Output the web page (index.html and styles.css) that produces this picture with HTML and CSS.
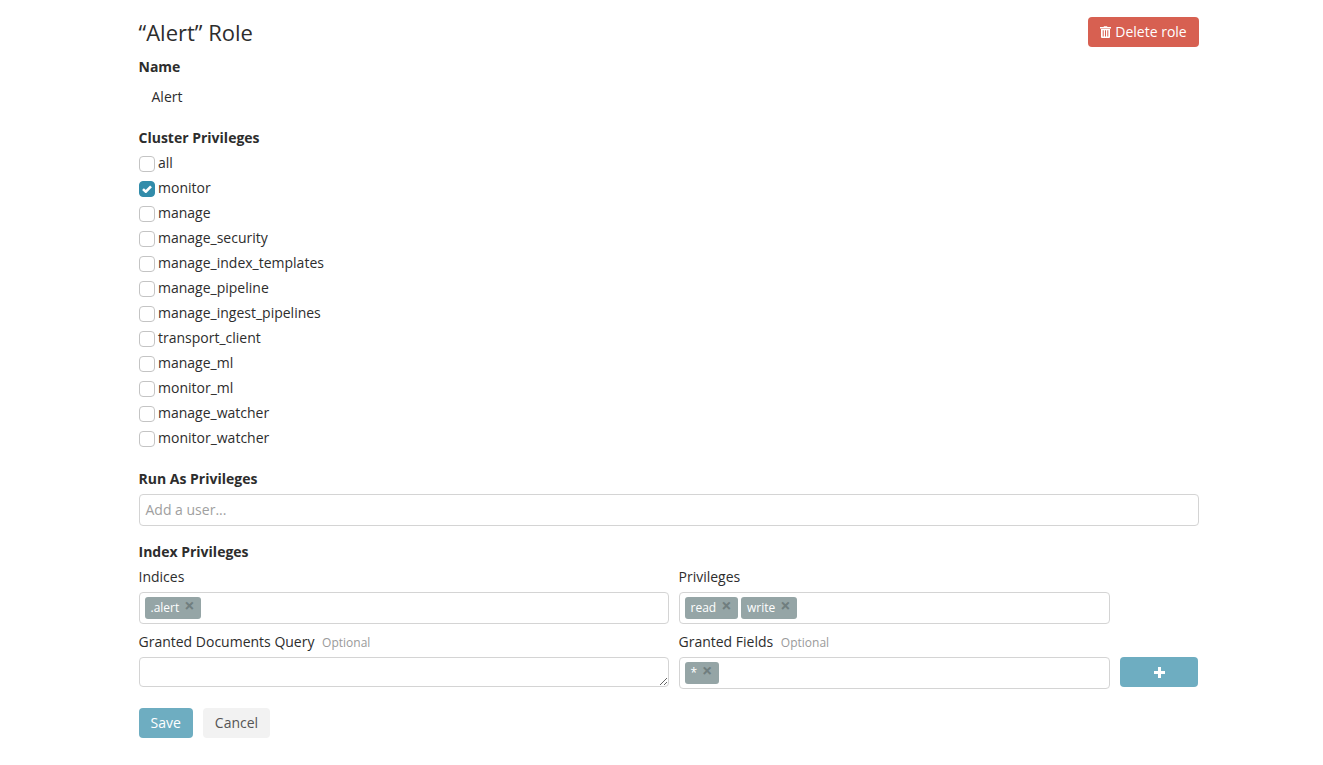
FILE: index.html
```html
<!DOCTYPE html>
<html lang="en">
<head>
<meta charset="utf-8">
<title>Alert Role</title>
<link rel="stylesheet" href="styles.css">
</head>
<body>
<main class="page">
  <header class="head">
    <h1 class="title">“Alert” Role</h1>
    <button class="btn btn-danger" type="button">
      <svg class="trash" viewBox="0 0 11 12" width="11" height="12" aria-hidden="true"><path fill="#fff" fill-rule="evenodd" d="M3.5 1 4 .2h3L7.5 1H11v1.5H0V1zM1 3h9v8a1 1 0 0 1-1 1H2a1 1 0 0 1-1-1zm1.7 1.3v6.2h1V4.3zm2.3 0v6.2h1V4.3zm2.3 0v6.2h1V4.3z"/></svg>
      Delete role
    </button>
  </header>

  <h2 class="section name-label">Name</h2>
  <p class="name-value">Alert</p>

  <h2 class="section cluster-label">Cluster Privileges</h2>
  <ul class="checks">
    <li class="check"><span class="box"></span>all</li>
    <li class="check"><span class="box on"><svg viewBox="0 0 10 8" width="10" height="8" aria-hidden="true"><path d="M1 4.1 3.8 6.7 9 1.3" fill="none" stroke="#fff" stroke-width="2.6"/></svg></span>monitor</li>
    <li class="check"><span class="box"></span>manage</li>
    <li class="check"><span class="box"></span>manage_security</li>
    <li class="check"><span class="box"></span>manage_index_templates</li>
    <li class="check"><span class="box"></span>manage_pipeline</li>
    <li class="check"><span class="box"></span>manage_ingest_pipelines</li>
    <li class="check"><span class="box"></span>transport_client</li>
    <li class="check"><span class="box"></span>manage_ml</li>
    <li class="check"><span class="box"></span>monitor_ml</li>
    <li class="check"><span class="box"></span>manage_watcher</li>
    <li class="check"><span class="box"></span>monitor_watcher</li>
  </ul>

  <h2 class="section runas-label">Run As Privileges</h2>
  <div class="field runas"><span class="placeholder">Add a user...</span></div>

  <h2 class="section index-label">Index Privileges</h2>
  <div class="index-grid">
    <div class="cell">
      <div class="sub-label">Indices</div>
      <div class="field"><span class="tag">.alert<span class="x">×</span></span></div>
    </div>
    <div class="cell">
      <div class="sub-label">Privileges</div>
      <div class="field"><span class="tag">read<span class="x">×</span></span><span class="tag">write<span class="x">×</span></span></div>
    </div>
    <div class="cell"></div>
    <div class="cell">
      <div class="sub-label">Granted Documents Query <small class="opt">Optional</small></div>
      <textarea class="query"></textarea>
    </div>
    <div class="cell">
      <div class="sub-label">Granted Fields <small class="opt">Optional</small></div>
      <div class="field"><span class="tag">*<span class="x">×</span></span></div>
    </div>
    <div class="cell add-cell">
      <button class="btn btn-primary add" type="button" aria-label="Add">
        <svg viewBox="0 0 11 11" width="11" height="11" aria-hidden="true"><path fill="#fff" d="M4 0h3v4h4v3H7v4H4V7H0V4h4z"/></svg>
      </button>
    </div>
  </div>

  <div class="actions">
    <button class="btn btn-primary" type="button">Save</button>
    <button class="btn btn-default" type="button">Cancel</button>
  </div>
</main>
</body>
</html>
```
FILE: styles.css
```css
* { box-sizing: border-box; }
html, body { margin: 0; height: 100%; background: #fff; }
body {
  font-family: "Open Sans", "Liberation Sans", sans-serif;
  font-size: 14px;
  line-height: 20px;
  color: #2d2d2d;
}
.page { width: 1060.5px; margin-left: 138.5px; padding-top: 17px; }
.head { display: flex; justify-content: space-between; align-items: flex-start; height: 30px; }
.title { margin: -1px 0 0; font-size: 22px; font-weight: 400; line-height: 32px; color: #2d2d2d; }
.section { margin: 0; font-size: 14px; font-weight: 700; line-height: 20px; }
.name-label { margin-top: 10px; }
.name-value { margin: 10px 0 0; padding-left: 13px; }
.cluster-label { margin-top: 21px; }
.checks { list-style: none; margin: 2px 0 0; padding: 0; }
.check { display: flex; align-items: center; height: 25px; }
.box {
  width: 16px; height: 16px; margin-right: 3.5px; margin-top: 2px;
  border: 1px solid #c4c4c4; border-radius: 4px; background: #fff;
  display: flex; align-items: center; justify-content: center;
}
.box.on { background: #328caa; border-color: #328caa; }
.runas-label { margin-top: 19px; }
.field {
  display: flex; align-items: center; gap: 3px;
  height: 32px; padding: 0 5px;
  border: 1px solid #d4d4d4; border-radius: 4px; background: #fff;
}
.runas { margin-top: 5px; padding: 0 6px; }
.placeholder { color: #a0a0a0; }
.index-label { margin-top: 16px; }
.index-grid {
  display: grid;
  grid-template-columns: 530px 431px 78px;
  column-gap: 10px;
  row-gap: 8px;
  margin-top: 5px;
}
.cell { min-width: 0; }
.sub-label { height: 20px; margin-bottom: 5px; line-height: 20px; }
.opt { margin-left: 4px; font-size: 12px; color: #9a9a9a; }
.query {
  display: block; width: 100%; height: 30px; padding: 4px 6px;
  border: 1px solid #d4d4d4; border-radius: 4px; background: #fff;
  font: inherit; outline: none;
}
.tag {
  display: inline-flex; align-items: flex-start;
  height: 22px; padding: 0 6.5px 0 6px;
  border-radius: 3px; background: #95a5a6; color: #fff;
  font-size: 12px; line-height: 22px;
}
.x {
  margin-left: 5px; color: #707e7f;
  font-size: 18px; font-weight: 700; line-height: 17px;
}
.add-cell { display: flex; align-items: flex-start; padding-top: 25px; }
.btn {
  display: inline-flex; align-items: center; justify-content: center;
  height: 30px; padding: 0 12px; border: 0; border-radius: 4px;
  font-family: inherit; font-size: 14px; line-height: 20px;
}
.btn-danger { background: #d76051; color: #fff; width: 111px; padding: 0; }
.trash { margin-right: 4px; }
.btn-primary { background: #6eadc1; color: #fff; }
.btn-default { background: #f2f2f2; color: #555; }
.add { width: 78px; padding: 0 0 0 1px; }
.actions { display: flex; gap: 10px; margin-top: 19px; }
```
